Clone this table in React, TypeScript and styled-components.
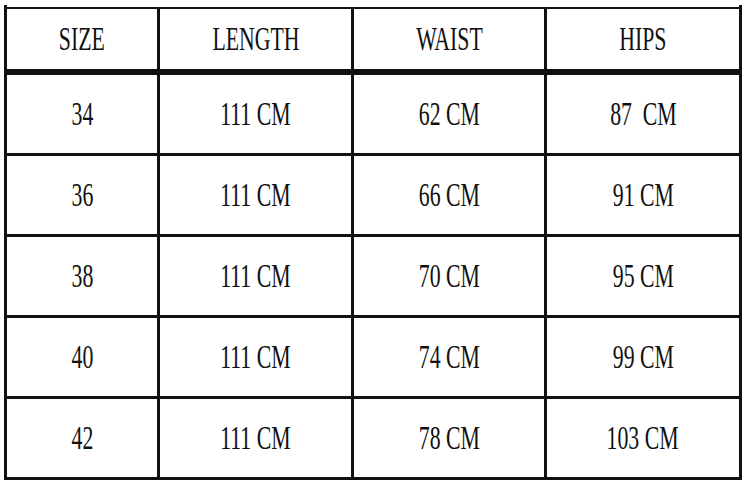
import React from "react";
import styled, { createGlobalStyle } from "styled-components";

const GlobalStyle = createGlobalStyle`
  html, body {
    margin: 0;
    padding: 0;
    background: #ffffff;
  }
  body {
    font-family: "Times New Roman", Times, "Liberation Serif", Tinos, "Noto Serif", "DejaVu Serif", FreeSerif, serif;
    color: #111111;
  }
`;

const Page = styled.div`
  padding: 5px 0 0 4px;
`;

const Frame = styled.div`
  width: 732px;
  border-left: 3px solid #111111;
  border-right: 3px solid #111111;
  padding-top: 2px;
  background: #ffffff;
`;

const Grid = styled.div`
  display: grid;
  grid-template-columns: 150px 191px 190px 192px;
  grid-template-rows: 63px repeat(5, 78px);
  column-gap: 3px;
  row-gap: 3px;
  padding: 2px 0 3px 0;
  background: #111111;
`;

const Cell = styled.div<{ $head?: boolean }>`
  background: #ffffff;
  display: flex;
  align-items: center;
  justify-content: center;
  box-sizing: border-box;
  border-bottom: ${(p) => (p.$head ? "3px solid #111111" : "none")};
  padding-top: ${(p) => (p.$head ? "0" : "1px")};
`;

const Label = styled.span`
  display: inline-block;
  font-family: "Times New Roman", Times, "Liberation Serif", Tinos, "Noto Serif", "DejaVu Serif", FreeSerif, serif;
  font-size: 33px;
  line-height: 1;
  font-weight: 400;
  color: #111111;
  white-space: pre;
  transform: scaleX(0.66);
  transform-origin: center;
`;

const headers = ["SIZE", "LENGTH", "WAIST", "HIPS"];
const rows = [
  ["34", "111 CM", "62 CM", "87  CM"],
  ["36", "111 CM", "66 CM", "91 CM"],
  ["38", "111 CM", "70 CM", "95 CM"],
  ["40", "111 CM", "74 CM", "99 CM"],
  ["42", "111 CM", "78 CM", "103 CM"],
];

export default function App() {
  return (
    <>
      <GlobalStyle />
      <Page>
        <Frame>
          <Grid>
            {headers.map((h) => (
              <Cell key={h} $head>
                <Label>{h}</Label>
              </Cell>
            ))}
            {rows.map((r, i) =>
              r.map((v, j) => (
                <Cell key={`${i}-${j}`}>
                  <Label>{v}</Label>
                </Cell>
              ))
            )}
          </Grid>
        </Frame>
      </Page>
    </>
  );
}
